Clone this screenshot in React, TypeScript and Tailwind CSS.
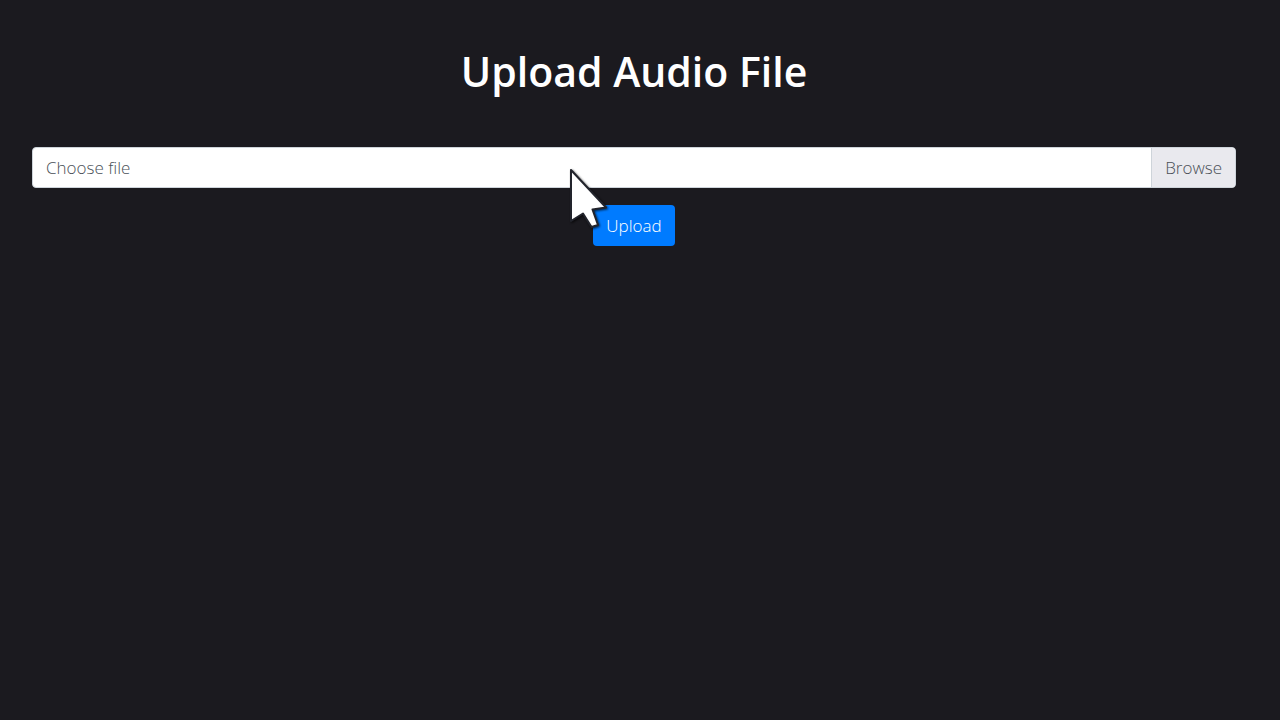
import { useState } from 'react';

function Pointer() {
  return (
    <svg
      width="44"
      height="68"
      viewBox="0 0 44 68"
      className="pointer-events-none absolute -top-10 -left-6 drop-shadow-[1px_1px_1px_rgba(0,0,0,0.7)]"
      aria-hidden="true"
    >
      <path
        d="M2 5V56L14 48.5L22.5 62L29 60L23.5 44.5L37 42.5Z"
        fill="#ffffff"
        stroke="#22242c"
        strokeWidth="2"
        strokeLinejoin="round"
      />
    </svg>
  );
}

export default function App() {
  const [fileName, setFileName] = useState('');

  return (
    <main className="min-h-screen bg-[#1b1a1f] pt-10 pr-11 pl-8 font-['Open_Sans','Noto_Sans',sans-serif]">
      <h1 className="text-center text-[41px] leading-[62px] font-semibold text-white">
        Upload Audio File
      </h1>

      <form className="mt-[45px]" onSubmit={e => e.preventDefault()}>
        <label
          htmlFor="audio-file"
          className="flex h-[41px] cursor-pointer overflow-hidden rounded border border-[#ced4da] bg-white text-[17px] font-light text-[#495057]"
        >
          <span className="flex flex-1 items-center px-[13px]">{fileName || 'Choose file'}</span>
          <span className="flex items-center border-l border-[#ced4da] bg-[#e9e9ee] px-[13px]">
            Browse
          </span>
        </label>
        <input
          id="audio-file"
          type="file"
          accept="audio/*"
          className="sr-only"
          onChange={e => setFileName(e.target.files?.[0]?.name ?? '')}
        />

        <div className="mt-[17px] flex justify-center">
          <div className="relative">
            <button
              type="submit"
              className="h-[41px] cursor-pointer rounded bg-[#007bff] px-[13px] text-[17px] font-light text-white"
            >
              Upload
            </button>
            <Pointer />
          </div>
        </div>
      </form>
    </main>
  );
}
